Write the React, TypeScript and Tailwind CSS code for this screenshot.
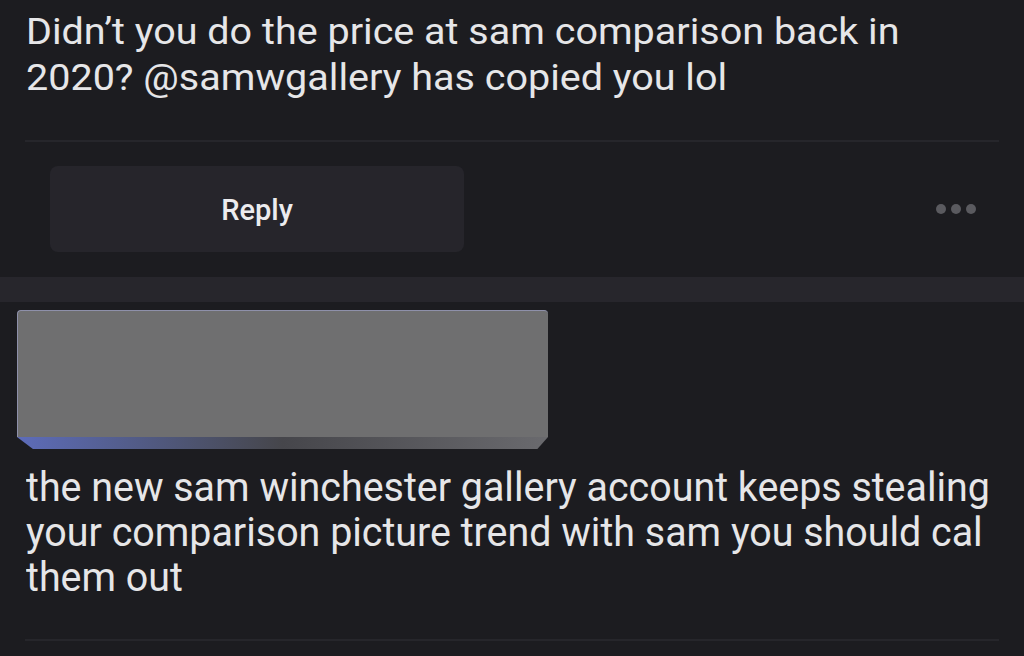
export default function App() {
  return (
    <div className="w-[1024px] h-[656px] overflow-hidden bg-[#1c1c20] text-[#e6e6e8]" style={{ fontFamily: "Roboto, 'Liberation Sans', sans-serif" }}>
      {/* first comment */}
      <div className="px-[26px] pt-[9px]">
        <p className="text-[36px] leading-[46px] scale-x-[1.098] origin-left w-[800px]">
          Didn’t you do the price at sam comparison back in
          <br />
          2020? @samwgallery has copied you lol
        </p>
      </div>
      <div className="mx-[25px] mt-[39px] h-[2px] bg-[#26262b]" />

      {/* actions */}
      <div className="flex items-center justify-between pl-[50px] pr-[48px] pt-[24px] pb-[25px]">
        <button className="w-[414px] h-[86px] pt-[4px] rounded-lg bg-[#26252b] text-[29px] font-medium text-[#ececef]">
          Reply
        </button>
        <div className="flex gap-[5px]">
          <span className="w-[10px] h-[10px] rounded-full bg-[#5a5a5f]" />
          <span className="w-[10px] h-[10px] rounded-full bg-[#5a5a5f]" />
          <span className="w-[10px] h-[10px] rounded-full bg-[#5a5a5f]" />
        </div>
      </div>

      {/* band */}
      <div className="h-[25px] bg-[#27262c]" />

      {/* second comment */}
      <div className="px-[17px] pt-[8px]">
        <div className="w-[531px]">
          <div className="h-[127px] rounded-t-[4px] bg-[#6f6f70] border-t border-l border-[#8e90aa]" />
          <div className="h-[12px] rounded-b-[4px] bg-gradient-to-r from-[#5d6cba] via-[#46464b] to-[#6a6a6e] [clip-path:polygon(0_0,100%_0,98%_100%,3%_100%)]" />
        </div>
      </div>
      <div className="px-[26px] pt-[16px]">
        <p className="text-[40px] leading-[45px] scale-x-[0.985] origin-left w-[1000px]">
          the new sam winchester gallery account keeps stealing
          <br />
          your comparison picture trend with sam you should cal
          <br />
          them out
        </p>
      </div>
      <div className="mx-[25px] mt-[39px] h-[2px] bg-[#26262b]" />
    </div>
  );
}
